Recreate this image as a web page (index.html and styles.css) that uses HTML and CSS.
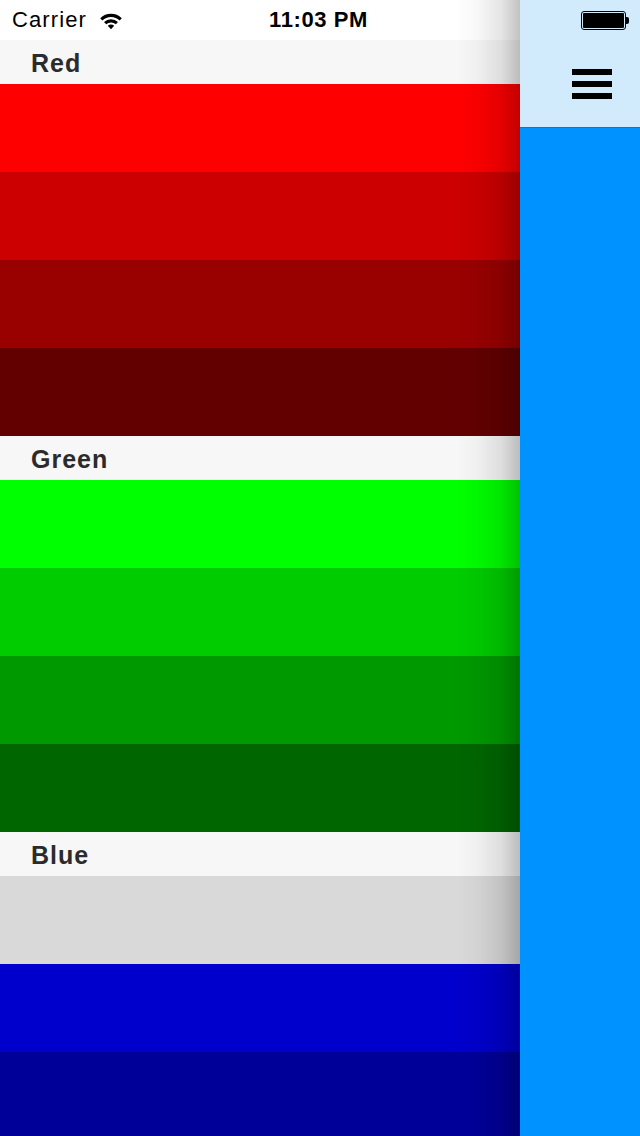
FILE: index.html
```html
<!DOCTYPE html>
<html>
<head>
<meta charset="utf-8">
<link rel="stylesheet" href="styles.css">
</head>
<body>
<div class="app">
  <main class="panel">
    <div class="status">
      <div class="carrier">
        <span>Carrier</span>
        <svg class="wifi" width="24" height="18" viewBox="0 0 24 18">
          <path d="M1.2 6.2 A15.5 15.5 0 0 1 22.8 6.2 L20.6 8.5 A12.3 12.3 0 0 0 3.4 8.5 Z" fill="#000"/>
          <path d="M5 10 A10.2 10.2 0 0 1 19 10 L16.8 12.3 A7 7 0 0 0 7.2 12.3 Z" fill="#000"/>
          <path d="M8.8 13.8 A5 5 0 0 1 15.2 13.8 L12 17.2 Z" fill="#000"/>
        </svg>
      </div>
      <div class="time">11:03 PM</div>
    </div>
    <section>
      <h2 class="head">Red</h2>
      <div class="row r1"></div>
      <div class="row r2"></div>
      <div class="row r3"></div>
      <div class="row r4"></div>
    </section>
    <section>
      <h2 class="head">Green</h2>
      <div class="row g1"></div>
      <div class="row g2"></div>
      <div class="row g3"></div>
      <div class="row g4"></div>
    </section>
    <section>
      <h2 class="head">Blue</h2>
      <div class="row sel"></div>
      <div class="row b2"></div>
      <div class="row b3"></div>
      <div class="row b4"></div>
    </section>
    <div class="shadow"></div>
  </main>
  <aside class="side">
    <div class="side-top">
      <div class="battery"><div class="cell"><div class="fill"></div></div><div class="nub"></div></div>
      <div class="menu">
        <span></span><span></span><span></span>
      </div>
    </div>
  </aside>
</div>
</body>
</html>
```

FILE: styles.css
```css
html, body {
  margin: 0;
  padding: 0;
  width: 640px;
  height: 1136px;
  overflow: hidden;
  font-family: "Liberation Sans", Arial, sans-serif;
}
.app {
  display: flex;
  width: 640px;
  height: 1136px;
}
.panel {
  position: relative;
  width: 520px;
  flex: none;
  height: 1136px;
  overflow: hidden;
  background: #fff;
}
.status {
  height: 40px;
  display: grid;
  grid-template-columns: auto 1fr;
  align-items: center;
  background: #fff;
}
.carrier {
  display: flex;
  align-items: center;
  padding-left: 12px;
  font-size: 22px;
  letter-spacing: 1.1px;
  color: #000;
}
.wifi {
  margin-left: 12px;
  margin-top: 2px;
}
.time {
  justify-self: end;
  margin-right: 152px;
  font-size: 22px;
  font-weight: bold;
  letter-spacing: 0.6px;
  color: #000;
}
.head {
  margin: 0;
  height: 44px;
  line-height: 47px;
  padding-left: 31px;
  font-size: 25px;
  font-weight: bold;
  letter-spacing: 1px;
  color: #2b2b2b;
  background: #f7f7f7;
}
.row { height: 88px; }
.r1 { background: #ff0000; }
.r2 { background: #cc0000; }
.r3 { background: #990000; }
.r4 { background: #620000; }
.g1 { background: #00ff00; }
.g2 { background: #00cc00; }
.g3 { background: #009900; }
.g4 { background: #006600; }
.sel { background: #d9d9d9; }
.b2 { background: #0000cc; }
.b3 { background: #000099; }
.b4 { background: #000066; }
.shadow {
  position: absolute;
  top: 0;
  right: 0;
  width: 64px;
  height: 100%;
  background: linear-gradient(to right, rgba(0,0,0,0) 0%, rgba(0,0,0,0.03) 35%, rgba(0,0,0,0.1) 70%, rgba(0,0,0,0.24) 100%);
  pointer-events: none;
}
.side {
  flex: 1;
  background: #0092ff;
}
.side-top {
  height: 127px;
  background: #d1ebfd;
  border-bottom: 1px solid #0a78c8;
  display: flex;
  flex-direction: column;
}
.battery {
  display: flex;
  align-items: center;
  align-self: flex-end;
  margin-top: 11px;
  margin-right: 11px;
}
.cell {
  width: 41px;
  height: 15px;
  border: 1.5px solid #000;
  border-radius: 3px;
  padding: 1px;
  box-sizing: content-box;
}
.fill {
  width: 100%;
  height: 100%;
  background: #000;
  border-radius: 1px;
}
.nub {
  width: 3px;
  height: 7px;
  background: #000;
  border-radius: 0 2px 2px 0;
}
.menu {
  display: flex;
  flex-direction: column;
  gap: 6px;
  margin-top: 39px;
  margin-left: 52px;
}
.menu span {
  display: block;
  width: 40px;
  height: 6px;
  background: #000;
}
```
